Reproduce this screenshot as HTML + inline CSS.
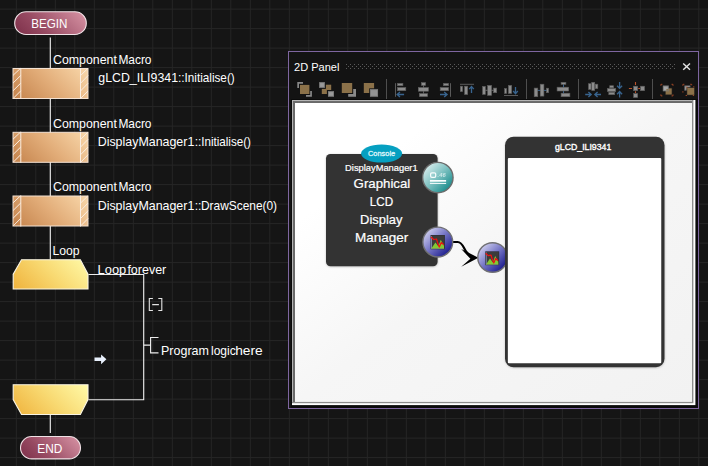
<!DOCTYPE html>
<html><head><meta charset="utf-8">
<style>
html,body{margin:0;padding:0;background:#151515;}
body{width:708px;height:466px;overflow:hidden;position:relative;font-family:"Liberation Sans",sans-serif;}
svg{position:absolute;left:0;top:0;}
text{font-family:"Liberation Sans",sans-serif;}
</style></head><body>
<svg width="708" height="466" viewBox="0 0 708 466">
<defs>
<linearGradient id="gBegin" gradientUnits="userSpaceOnUse" x1="14.7" y1="34.5" x2="61.85" y2="-12.65"><stop offset="0" stop-color="#7c2f49"/><stop offset="0.35" stop-color="#974a62"/><stop offset="1" stop-color="#d995a6"/></linearGradient>
<linearGradient id="gMacro" gradientUnits="userSpaceOnUse" x1="13" y1="30.5" x2="65.5" y2="-22"><stop offset="0" stop-color="#c4824b"/><stop offset="0.5" stop-color="#e2ad79"/><stop offset="1" stop-color="#f9d8ab"/></linearGradient>
<linearGradient id="gLoop" gradientUnits="userSpaceOnUse" x1="13.2" y1="289" x2="65.2" y2="237"><stop offset="0" stop-color="#efb23c"/><stop offset="0.5" stop-color="#f8d870"/><stop offset="1" stop-color="#fffaa8"/></linearGradient>
<linearGradient id="gEnd" href="#gBegin" x1="20.5" y1="458.9" x2="61.7" y2="417.7"/>
<linearGradient id="gLoop2" href="#gLoop" x1="13.2" y1="414.5" x2="65.2" y2="362.5"/>
<linearGradient id="gTeal" x1="0.12" y1="0.12" x2="0.88" y2="0.88"><stop offset="0" stop-color="#d6ebeb"/><stop offset="0.45" stop-color="#84c5c5"/><stop offset="1" stop-color="#178b8b"/></linearGradient>
<linearGradient id="gBlue" x1="0.12" y1="0.12" x2="0.88" y2="0.88"><stop offset="0" stop-color="#cfcfee"/><stop offset="0.45" stop-color="#7a7ac8"/><stop offset="1" stop-color="#18188a"/></linearGradient>
<linearGradient id="gCanvas" x1="0" y1="0" x2="1" y2="1"><stop offset="0" stop-color="#ffffff"/><stop offset="0.2" stop-color="#ffffff"/><stop offset="0.5" stop-color="#f6f6f6"/><stop offset="1" stop-color="#f2f2f2"/></linearGradient>
<pattern id="dots" x="346" y="64" width="4" height="4" patternUnits="userSpaceOnUse">
<rect x="0" y="0" width="1" height="1" fill="#5a5a5a"/><rect x="2" y="2" width="1" height="1" fill="#5a5a5a"/>
</pattern>
<clipPath id="cvclip"><rect x="295" y="103" width="397.5" height="299"/></clipPath>
<g id="macro">
<rect x="13" y="0.5" width="75" height="30" fill="url(#gMacro)" stroke="#f4e2d2" stroke-width="1"/>
<g stroke="#fbeee2" stroke-width="1" fill="none">
<path d="M20.8 0V31M80.5 0V31"/>
<path d="M13 7.4L20.3 0.5M13 15.1L20.8 7.4M13 22.8L20.8 15.1M13.3 30.3L20.8 22.8"/>
<path d="M80.5 7.6L87.7 0.5M80.5 15.3L88 7.6M80.5 23L88 15.3M80.8 30.3L88 23"/>
</g>
</g>
</defs>

<g fill="#262626">
<rect x="-3.70" y="0" width="1" height="466"/>
<rect x="15.80" y="0" width="1" height="466"/>
<rect x="35.30" y="0" width="1" height="466"/>
<rect x="54.80" y="0" width="1" height="466"/>
<rect x="74.30" y="0" width="1" height="466"/>
<rect x="93.80" y="0" width="1" height="466"/>
<rect x="113.30" y="0" width="1" height="466"/>
<rect x="132.80" y="0" width="1" height="466"/>
<rect x="152.30" y="0" width="1" height="466"/>
<rect x="171.80" y="0" width="1" height="466"/>
<rect x="191.30" y="0" width="1" height="466"/>
<rect x="210.80" y="0" width="1" height="466"/>
<rect x="230.30" y="0" width="1" height="466"/>
<rect x="249.80" y="0" width="1" height="466"/>
<rect x="269.30" y="0" width="1" height="466"/>
<rect x="288.80" y="0" width="1" height="466"/>
<rect x="308.30" y="0" width="1" height="466"/>
<rect x="327.80" y="0" width="1" height="466"/>
<rect x="347.30" y="0" width="1" height="466"/>
<rect x="366.80" y="0" width="1" height="466"/>
<rect x="386.30" y="0" width="1" height="466"/>
<rect x="405.80" y="0" width="1" height="466"/>
<rect x="425.30" y="0" width="1" height="466"/>
<rect x="444.80" y="0" width="1" height="466"/>
<rect x="464.30" y="0" width="1" height="466"/>
<rect x="483.80" y="0" width="1" height="466"/>
<rect x="503.30" y="0" width="1" height="466"/>
<rect x="522.80" y="0" width="1" height="466"/>
<rect x="542.30" y="0" width="1" height="466"/>
<rect x="561.80" y="0" width="1" height="466"/>
<rect x="581.30" y="0" width="1" height="466"/>
<rect x="600.80" y="0" width="1" height="466"/>
<rect x="620.30" y="0" width="1" height="466"/>
<rect x="639.80" y="0" width="1" height="466"/>
<rect x="659.30" y="0" width="1" height="466"/>
<rect x="678.80" y="0" width="1" height="466"/>
<rect x="698.30" y="0" width="1" height="466"/>
<rect x="0" y="-10.90" width="708" height="1"/>
<rect x="0" y="8.60" width="708" height="1"/>
<rect x="0" y="28.10" width="708" height="1"/>
<rect x="0" y="47.60" width="708" height="1"/>
<rect x="0" y="67.10" width="708" height="1"/>
<rect x="0" y="86.60" width="708" height="1"/>
<rect x="0" y="106.10" width="708" height="1"/>
<rect x="0" y="125.60" width="708" height="1"/>
<rect x="0" y="145.10" width="708" height="1"/>
<rect x="0" y="164.60" width="708" height="1"/>
<rect x="0" y="184.10" width="708" height="1"/>
<rect x="0" y="203.60" width="708" height="1"/>
<rect x="0" y="223.10" width="708" height="1"/>
<rect x="0" y="242.60" width="708" height="1"/>
<rect x="0" y="262.10" width="708" height="1"/>
<rect x="0" y="281.60" width="708" height="1"/>
<rect x="0" y="301.10" width="708" height="1"/>
<rect x="0" y="320.60" width="708" height="1"/>
<rect x="0" y="340.10" width="708" height="1"/>
<rect x="0" y="359.60" width="708" height="1"/>
<rect x="0" y="379.10" width="708" height="1"/>
<rect x="0" y="398.60" width="708" height="1"/>
<rect x="0" y="418.10" width="708" height="1"/>
<rect x="0" y="437.60" width="708" height="1"/>
<rect x="0" y="457.10" width="708" height="1"/>
</g>
<!-- flow lines -->
<g stroke="#ececec" stroke-width="1.15" fill="none">
<path d="M50.3 37.5V259.3M50.3 415V433"/>
<path d="M88.5 274.5H143.7V399.7H88.5"/>
<path d="M143.7 345.1H150.6M158.5 337.5H150.6V352.8H158.5"/>
</g>

<!-- BEGIN -->
<rect x="14.7" y="11.8" width="71.6" height="22.7" rx="11.35" fill="url(#gBegin)" stroke="#f0e2e6" stroke-width="1.1"/>
<text x="31.2" y="27.9" font-size="12.7" fill="#fff" textLength="36.2" lengthAdjust="spacingAndGlyphs">BEGIN</text>

<!-- macros -->
<use href="#macro" y="68"/>
<use href="#macro" y="131.8"/>
<use href="#macro" y="195.5"/>
<g fill="#fff" font-size="12.2">
<text x="53" y="63.9" textLength="63.9" lengthAdjust="spacingAndGlyphs">Component</text>
<text x="118.4" y="63.9" textLength="33.1" lengthAdjust="spacingAndGlyphs">Macro</text>
<text x="98.3" y="81.6" textLength="31.5" lengthAdjust="spacingAndGlyphs">gLCD</text>
<text x="129.6" y="81.6" textLength="7.4" lengthAdjust="spacingAndGlyphs">_</text>
<text x="136.8" y="81.6" textLength="41.3" lengthAdjust="spacingAndGlyphs">ILI9341</text>
<text x="177.9" y="81.6">::</text>
<text x="184.5" y="81.6" textLength="50.2" lengthAdjust="spacingAndGlyphs">Initialise()</text>
<text x="53" y="127.9" textLength="63.9" lengthAdjust="spacingAndGlyphs">Component</text>
<text x="118.4" y="127.9" textLength="33.1" lengthAdjust="spacingAndGlyphs">Macro</text>
<text x="97.7" y="146" textLength="96.6" lengthAdjust="spacingAndGlyphs">DisplayManager1</text>
<text x="194.7" y="146">::</text>
<text x="201.3" y="146" textLength="49.6" lengthAdjust="spacingAndGlyphs">Initialise()</text>
<text x="53" y="191.1" textLength="63.9" lengthAdjust="spacingAndGlyphs">Component</text>
<text x="118.4" y="191.1" textLength="33.1" lengthAdjust="spacingAndGlyphs">Macro</text>
<text x="97.7" y="209.8" textLength="96.6" lengthAdjust="spacingAndGlyphs">DisplayManager1</text>
<text x="194.7" y="209.8">::</text>
<text x="201" y="209.8" textLength="76.1" lengthAdjust="spacingAndGlyphs">DrawScene(0)</text>
<text x="52.5" y="255">Loop</text>
<text x="97.5" y="273.8" textLength="28.8" lengthAdjust="spacingAndGlyphs">Loop</text>
<text x="127.4" y="273.8" textLength="38.9" lengthAdjust="spacingAndGlyphs">forever</text>
<text x="161" y="354.5" textLength="47.9" lengthAdjust="spacingAndGlyphs">Program</text>
<text x="211" y="354.5" textLength="24.7" lengthAdjust="spacingAndGlyphs">logic</text>
<text x="235.2" y="354.5" textLength="27.5" lengthAdjust="spacingAndGlyphs">here</text>
</g>

<path d="M152.9 298.5H149.3V310.5H152.9M158.3 298.5H161.8V310.5H158.3M152.2 304.6H158.9" stroke="#e4e4e4" stroke-width="1.1" fill="none"/>
<!-- loop shapes -->
<path d="M21.5 259.8H80.4L88 274.2V289H13.2V274.2Z" fill="url(#gLoop)" stroke="#faf5e4" stroke-width="1.1"/>
<path d="M13.2 384.7H88V399.6L80.4 414.5H21.5L13.2 399.6Z" fill="url(#gLoop2)" stroke="#faf5e4" stroke-width="1.1"/>

<!-- arrow -->
<path d="M94.5 357.6H101.1V354.4L106.4 359.3L101.1 364.2V361H94.5Z" fill="#e8f0fc"/>

<!-- END -->
<rect x="20.5" y="436.5" width="60" height="22.4" rx="11.2" fill="url(#gEnd)" stroke="#f0e2e6" stroke-width="1.1"/>
<text x="37.3" y="452.6" font-size="12.7" fill="#fff" textLength="25.1" lengthAdjust="spacingAndGlyphs">END</text>

<!-- PANEL -->
<rect x="288.5" y="51.5" width="410" height="357" fill="#131313" stroke="#7e66a0" stroke-width="1"/>
<text x="294" y="70.8" font-size="10.8" fill="#fff" textLength="45.4" lengthAdjust="spacingAndGlyphs">2D Panel</text>
<rect x="346" y="64" width="329" height="5" fill="url(#dots)"/>
<path d="M683.2 63.4L690 69.8M690 63.4L683.2 69.8" stroke="#e4e4e4" stroke-width="1.4" fill="none"/>

<!-- canvas -->
<rect x="291" y="99" width="407" height="309" fill="#0a0a0a"/>
<rect x="292" y="100" width="403.4" height="305.1" fill="#ffffff"/>
<rect x="292" y="100" width="401.4" height="303.2" fill="#8c8c8c"/>
<rect x="292" y="100" width="400" height="1.1" fill="#b4b4b4"/>
<rect x="292" y="100" width="1.1" height="302" fill="#b4b4b4"/>
<rect x="293" y="101.1" width="399" height="2" fill="#6a6a6a"/>
<rect x="293" y="101.1" width="2" height="300.8" fill="#6a6a6a"/>
<rect x="295" y="103" width="397" height="298.9" fill="url(#gCanvas)"/>

<!-- TOOLBAR -->
<g id="toolbar" shape-rendering="auto">
<g fill="#4e4e4e">
<rect x="386" y="79" width="1" height="20"/><rect x="526" y="79" width="1" height="20"/>
<rect x="578" y="79" width="1" height="20"/><rect x="652" y="79" width="1" height="20"/>
</g>
<!-- icon1 -->
<path d="M297.3 82.1H303V83.8H299V88H297.3Z" fill="#888"/>
<rect x="300" y="84.9" width="9.4" height="9.1" fill="#8b7149"/>
<path d="M311.9 91.1V96.8H306V95.1H310.2V91.1Z" fill="#888"/>
<!-- icon2 -->
<rect x="319.1" y="82.1" width="5.8" height="5.8" fill="#7d7d7d"/><rect x="320.1" y="83.1" width="3.8" height="3.8" fill="#9a9a9a"/>
<rect x="325.9" y="84.7" width="5.3" height="5.3" fill="#8b7149"/>
<rect x="321.8" y="88.9" width="5.1" height="5.1" fill="#8b7149"/>
<rect x="328" y="91.1" width="6" height="5.7" fill="#7d7d7d"/><rect x="329" y="92.1" width="4" height="3.7" fill="#9a9a9a"/>
<!-- icon3 -->
<rect x="341.8" y="83" width="10.4" height="10" fill="#8b7149"/>
<path d="M356 89.1V96.8H348.2V94H353.2V89.1Z" fill="#8a8a8a"/>
<!-- icon4 -->
<rect x="363.8" y="83" width="10.3" height="10" fill="#8b7149"/>
<rect x="369.2" y="88.3" width="9.6" height="9.3" fill="#1a1a1a"/>
<rect x="370" y="89.1" width="8" height="7.7" fill="#7d7d7d"/><rect x="371" y="90.1" width="6" height="5.7" fill="#939393"/>
<!-- icon5 align left -->
<rect x="395" y="83.2" width="1" height="13.6" fill="#5a5a5a"/>
<g fill="#8c8c8c" stroke="#5c5c5c" stroke-width="0.6">
<rect x="397.4" y="83.4" width="5.5" height="2.3"/><rect x="397.4" y="87.5" width="8.4" height="3.2"/>
</g>
<path d="M404.1 94.5H397.3M400 91.9L397.1 94.5L400 97.1" stroke="#38648f" stroke-width="1.3" fill="none"/>
<!-- icon6 align center -->
<rect x="423" y="85" width="1" height="9" fill="#5a5a5a"/>
<g fill="#8c8c8c" stroke="#5c5c5c" stroke-width="0.6">
<rect x="421.4" y="82.6" width="4.2" height="2.8"/><rect x="418.3" y="87.5" width="10.2" height="3.7"/><rect x="419.4" y="93.6" width="8.2" height="3"/>
</g>
<!-- icon7 align right -->
<rect x="450" y="83.2" width="1" height="13.6" fill="#5a5a5a"/>
<g fill="#8c8c8c" stroke="#5c5c5c" stroke-width="0.6">
<rect x="443.4" y="83.4" width="5.2" height="2.3"/><rect x="440.2" y="87.5" width="8.4" height="3.2"/>
</g>
<path d="M440 94.5H446.9M444.2 91.9L447.1 94.5L444.2 97.1" stroke="#38648f" stroke-width="1.3" fill="none"/>
<!-- icon8 align top -->
<rect x="460" y="83.8" width="14" height="1" fill="#5a5a5a"/>
<g fill="#8c8c8c" stroke="#5c5c5c" stroke-width="0.6">
<rect x="460.3" y="86.2" width="2.3" height="5.4"/><rect x="464.6" y="86.2" width="3.1" height="8.3"/>
</g>
<path d="M471.5 93V86.6M469.2 89.2L471.5 86.4L473.8 89.2" stroke="#38648f" stroke-width="1.3" fill="none"/>
<!-- icon9 align middle -->
<rect x="484" y="89.8" width="11" height="1" fill="#666"/>
<g fill="#8c8c8c" stroke="#5c5c5c" stroke-width="0.6">
<rect x="482.6" y="86.4" width="2.8" height="8"/><rect x="487.6" y="85.4" width="4" height="10"/><rect x="493.6" y="88.1" width="3.1" height="4.6"/>
</g>
<!-- icon10 align bottom -->
<rect x="504" y="95" width="14" height="1" fill="#5a5a5a"/>
<g fill="#8c8c8c" stroke="#5c5c5c" stroke-width="0.6">
<rect x="504.6" y="88.5" width="2" height="5"/><rect x="508.4" y="85.4" width="3.3" height="8.1"/>
</g>
<path d="M515.5 87V93.6M513.2 91L515.5 93.8L517.8 91" stroke="#38648f" stroke-width="1.3" fill="none"/>
<!-- icon11 space horiz -->
<path d="M537 90.4H541M543 90.4H547" stroke="#38648f" stroke-width="1" fill="none"/>
<g fill="#8c8c8c" stroke="#5c5c5c" stroke-width="0.6">
<rect x="534.2" y="88.1" width="3.6" height="8.6"/><rect x="540.2" y="84.2" width="3.7" height="11.9"/><rect x="546.5" y="88.2" width="2.1" height="4.5"/>
</g>
<!-- icon12 space vert -->
<path d="M563.5 84V87.5M563.5 90.5V93.5" stroke="#38648f" stroke-width="1" fill="none"/>
<g fill="#8c8c8c" stroke="#5c5c5c" stroke-width="0.6">
<rect x="561.1" y="82.3" width="4.8" height="2.1"/><rect x="557.1" y="87.2" width="11.6" height="3.8"/><rect x="561.1" y="93.2" width="8.8" height="3.5"/>
</g>
<!-- icon13 compress horiz -->
<g fill="#8c8c8c" stroke="#5c5c5c" stroke-width="0.6">
<rect x="588.5" y="83.7" width="2.5" height="5.8"/><rect x="591.7" y="82.3" width="3" height="8.2"/><rect x="595.3" y="84.2" width="2.5" height="4.4"/>
</g>
<path d="M585.2 94.5H590.9M588.4 91.9L591.2 94.5L588.4 97.1M601 94.5H595.1M597.6 91.9L594.8 94.5L597.6 97.1" stroke="#38648f" stroke-width="1.3" fill="none"/>
<!-- icon14 compress vert -->
<g fill="#8c8c8c" stroke="#5c5c5c" stroke-width="0.6">
<rect x="609.7" y="85.7" width="3.9" height="2.1"/><rect x="607.4" y="88.5" width="8.3" height="3.1"/><rect x="608.8" y="92.3" width="5.9" height="2.4"/>
</g>
<path d="M619.6 82.1V88.1M617.1 85.7L619.6 88.4L622.1 85.7M619.6 97.6V91.7M617.1 94.2L619.6 91.5L622.1 94.2" stroke="#38648f" stroke-width="1.3" fill="none"/>
<!-- icon15 -->
<g fill="#8c8c8c" stroke="#5c5c5c" stroke-width="0.6">
<rect x="633.6" y="86.2" width="4.1" height="4.5"/><rect x="640.5" y="86.2" width="4.1" height="4.5"/><rect x="633.6" y="93.5" width="4.1" height="4"/>
</g>
<path d="M628.9 88.5H632M638.2 88.5H640M635.5 81.9V84.9M635.5 91.2V93" stroke="#b9532b" stroke-width="1.1" fill="none"/>
<!-- icon16 -->
<rect x="665" y="87.7" width="7.3" height="7.4" fill="#26231e"/>
<rect x="665.7" y="88.4" width="6" height="6.1" fill="#8b7149"/>
<rect x="662.8" y="85.5" width="6" height="5.8" fill="#7a7a7a"/><rect x="663.8" y="86.5" width="4" height="3.8" fill="#a6a6a6"/>
<rect x="666.4" y="89" width="1.7" height="1.6" fill="#8b7149"/>
<path d="M660.9 85.8V84.3H662.4M671.5 84.3H673V85.8M660.9 94.4V95.9H662.4M671.5 95.9H673V94.4" stroke="#a84c28" stroke-width="0.9" fill="none"/>
<!-- icon17 -->
<rect x="684.4" y="85.5" width="6" height="5.1" fill="#7a7a7a"/><rect x="685.4" y="86.5" width="4" height="3.1" fill="#a6a6a6"/>
<rect x="686.5" y="87.2" width="8.3" height="8.3" fill="#26231e"/>
<rect x="687.2" y="87.9" width="7" height="6.9" fill="#8b7149"/>
<path d="M682.9 85.8V84.3H684.4M690.2 84.3H691.7V85.3M693.8 86.2V87.4M682.9 91.2V92.6M685.6 95.5H687M692.8 95.5H694" stroke="#a84c28" stroke-width="0.9" fill="none"/>
<rect x="686.3" y="86.7" width="1.1" height="1.1" fill="#b9532b"/>
</g>

<!-- COMPONENTS -->
<defs>
<filter id="sh" x="-10%" y="-10%" width="120%" height="120%"><feGaussianBlur stdDeviation="1.2"/></filter>
<g id="chart">
<rect x="-7.2" y="-7.1" width="14.4" height="14.3" fill="#30303a"/>
<rect x="-6.5" y="-6.4" width="13" height="12.9" fill="#3b3b3b"/>
<path d="M-6.2 6.2L-2.3 0.3L0.6 4.2L3.1 -2.3L6.3 3.6V6.2Z" fill="#84c832"/>
<rect x="-6.6" y="-6" width="0.9" height="12.4" fill="#7f8fb4"/>
<rect x="-6.6" y="5.8" width="13" height="0.8" fill="#9fd06a" opacity="0.8"/>
<path d="M-6.7 -5.1L-4.1 -2.6L-1.2 -3.1L-0.2 0.3L1.6 4.9L3.6 0.3L6 2.6" stroke="#ee1111" stroke-width="1.25" fill="none" stroke-linejoin="round"/>
</g>
</defs>
<g clip-path="url(#cvclip)">
<!-- DisplayManager box -->
<rect x="326" y="154.6" width="112" height="112.4" rx="5" fill="#000" opacity="0.22" filter="url(#sh)"/>
<rect x="326" y="154" width="111.6" height="112.3" rx="4.5" fill="#333333"/>
<ellipse cx="381.6" cy="153.55" rx="20.5" ry="9.05" fill="#06a0c1"/>
<text x="368" y="155.8" font-size="6.9" fill="#dff4f9" stroke="#dff4f9" stroke-width="0.3" textLength="27.2" lengthAdjust="spacingAndGlyphs">Console</text>
<g fill="#ffffff" stroke="#ffffff" stroke-width="0.2">
<text x="345.1" y="170.9" font-size="8.6" textLength="72.5" lengthAdjust="spacingAndGlyphs">DisplayManager1</text>
<text x="353.6" y="188" font-size="12.6" textLength="56.7" lengthAdjust="spacingAndGlyphs">Graphical</text>
<text x="369.7" y="205.8" font-size="12.6" textLength="23.4" lengthAdjust="spacingAndGlyphs">LCD</text>
<text x="360.1" y="223.6" font-size="12.6" textLength="42.4" lengthAdjust="spacingAndGlyphs">Display</text>
<text x="354.9" y="242.1" font-size="12.6" textLength="53.3" lengthAdjust="spacingAndGlyphs">Manager</text>
</g>
<!-- teal circle -->
<circle cx="437.85" cy="177.55" r="15.2" fill="url(#gTeal)" stroke="#6c6c6c" stroke-width="1.4"/>
<rect x="430.6" y="172.8" width="5.1" height="4.6" rx="1.3" fill="none" stroke="#f6fcfc" stroke-width="1.25"/>
<text x="437.6" y="177.3" font-size="5.8" font-style="italic" font-weight="bold" fill="#eaf7f7" opacity="0.75">.46</text>
<rect x="429.9" y="180" width="16.2" height="1.7" fill="#fafefe"/>
<rect x="429.9" y="182.9" width="16.2" height="1.05" fill="#f2fafa"/>
<!-- connection -->
<path d="M452.4 242H457.6C462.2 242 463.4 247.6 465.8 251.2C467.6 254 469.6 255.6 472 256.8" stroke="#000" stroke-width="2.2" fill="none"/>
<path d="M478.4 257.7L461.2 249L470.4 258.8L461.2 266.7Z" fill="#000"/>
<!-- blue circle 1 -->
<circle cx="437.8" cy="242.05" r="14.9" fill="url(#gBlue)" stroke="#707074" stroke-width="1.4"/>
<use href="#chart" x="437.7" y="242.1"/>
<!-- blue circle 2 -->
<circle cx="492.6" cy="257.5" r="14.8" fill="url(#gBlue)" stroke="#707074" stroke-width="1.4"/>
<g transform="translate(492.2 258.2) scale(0.97)"><use href="#chart"/></g>
<!-- gLCD box -->
<rect x="505" y="137.4" width="159.8" height="230.6" rx="9" fill="#000" opacity="0.2" filter="url(#sh)"/>
<rect x="505" y="136.85" width="159.5" height="230.45" rx="8.5" fill="#333333"/>
<rect x="507.85" y="157.9" width="253.4" height="0" fill="none"/>
<rect x="507.85" y="157.9" width="153.4" height="205.3" rx="1" fill="#ffffff"/>
<text x="555" y="149.8" font-size="8.3" fill="#ffffff" stroke="#ffffff" stroke-width="0.35" textLength="56.3" lengthAdjust="spacingAndGlyphs">gLCD_ILI9341</text>
</g>

</svg>
</body></html>
